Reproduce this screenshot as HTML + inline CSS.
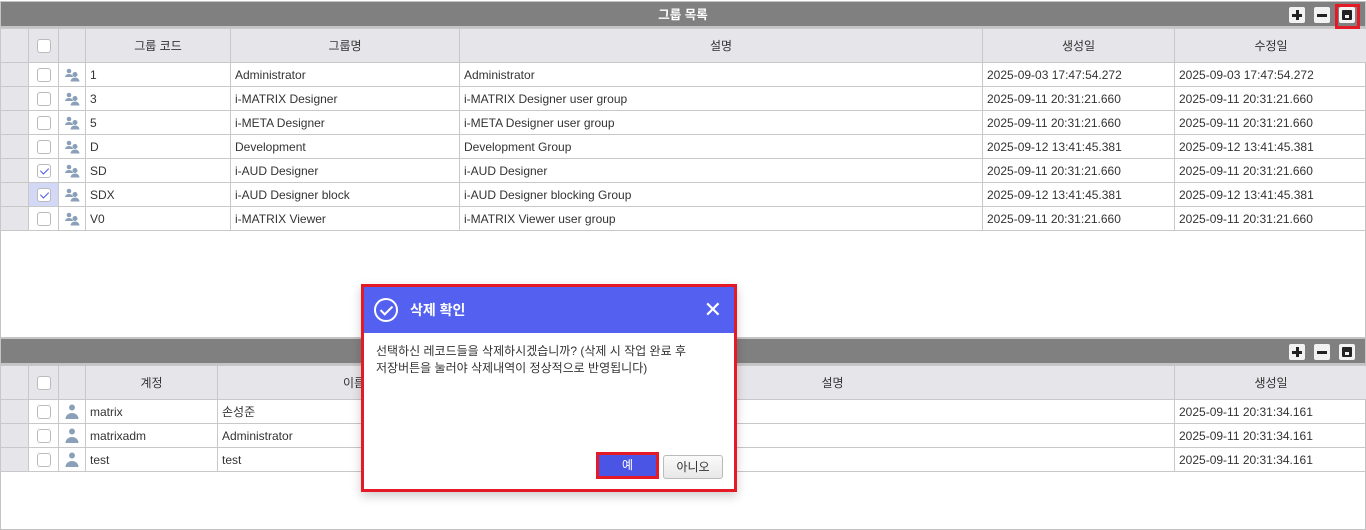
<!DOCTYPE html>
<html><head><meta charset="utf-8">
<style>
*{box-sizing:border-box;margin:0;padding:0}
body{width:1366px;height:530px;overflow:hidden;background:#fff;font-family:"Liberation Sans","Noto Sans CJK KR",sans-serif;font-size:12px;color:#333;position:relative}
.panel{position:absolute;left:0;width:1366px;border:1px solid #c4c4c4;background:#fff}
.title{height:26px;background:#808080;color:#fff;font-weight:bold;text-align:center;line-height:26px;font-size:12.5px;border-bottom:2px solid #c4c4c4;position:relative}
.btns{position:absolute;right:10px;top:5px;display:flex;gap:9px}
.b{width:16px;height:16px;background:#f2f2f2;border-radius:2px;position:relative}
.b.plus:before{content:"";position:absolute;left:3px;top:7px;width:10px;height:2.5px;background:#222}
.b.plus:after{content:"";position:absolute;left:7px;top:3px;width:2.5px;height:10px;background:#222}
.b.minus:before{content:"";position:absolute;left:3px;top:7px;width:10px;height:2.5px;background:#222}
.b.save:before{content:"";position:absolute;left:3px;top:3px;width:10px;height:10px;background:#222;border-radius:1px}
.b.save:after{content:"";position:absolute;left:6px;top:8px;width:4px;height:3px;background:#f2f2f2}
.redbox{position:absolute;left:1335px;top:4px;width:25px;height:25px;border:3px solid #e41a26}
table{border-collapse:collapse;table-layout:fixed;width:1367px;margin-left:-1px}
td,th{border:1px solid #c8c8c8;height:24px;padding:0 4px;white-space:nowrap;overflow:hidden;font-weight:normal}
th{height:34px;background:#e6e6ea;color:#333;text-align:center}
td.ri{background:#e6e6ea}
td.cb,th.cb{text-align:center;padding:0}
.chk{display:inline-block;width:14px;height:14px;border:1px solid #bbb;border-radius:3px;background:#fff;vertical-align:middle;position:relative}
.chk.on:after{content:"";position:absolute;left:4px;top:1px;width:4px;height:7px;border:solid #4a5ae8;border-width:0 1.5px 1.5px 0;transform:rotate(45deg)}
td.sel{background:#d4d8f7}
td.ic{text-align:center;padding:0}
td.ic svg{vertical-align:middle}
.dlg{position:absolute;left:361px;top:284px;width:376px;height:208px;border:3px solid #e41a26;background:#fff;box-shadow:0 4px 10px rgba(0,0,0,.2)}
.dh{height:46px;background:#5360f0;color:#fff;font-weight:bold;font-size:14px;line-height:46px;padding-left:46px;position:relative}
.dh .ok{position:absolute;left:10px;top:11px;width:24px;height:24px;border:2px solid #fff;border-radius:50%}
.dh .ok:after{content:"";position:absolute;left:7px;top:3px;width:5px;height:10px;border:solid #fff;border-width:0 2px 2px 0;transform:rotate(45deg)}
.dh .x{position:absolute;right:12px;top:0;font-size:22px;font-weight:normal}
.db{padding:10px 0 0 12px;line-height:17px;font-size:12px;color:#333}
.yes{position:absolute;left:232px;top:165px;width:63px;height:27px;border:3px solid #e41a26;background:#4a55e6;color:#fff;text-align:center;line-height:21px}
.no{position:absolute;left:299px;top:168px;width:60px;height:24px;border:1px solid #bbb;border-radius:3px;background:linear-gradient(#fafafa,#e8e8e8);text-align:center;line-height:22px;color:#333}
</style></head><body>

<div class="panel" style="top:1px;height:337px">
<div class="title">그룹 목록<div class="btns"><div class="b plus"></div><div class="b minus"></div><div class="b save"></div></div></div>
<table>
<colgroup><col style="width:28px"><col style="width:30px"><col style="width:27px"><col style="width:145px"><col style="width:229px"><col style="width:523px"><col style="width:192px"><col style="width:193px"></colgroup>
<tr><th></th><th class="cb"><span class="chk"></span></th><th></th><th>그룹 코드</th><th>그룹명</th><th>설명</th><th>생성일</th><th>수정일</th></tr>
<tr><td class="ri"></td><td class="cb"><span class="chk"></span></td><td class="ic"><svg width="16" height="14" viewBox="0 0 16 14"><circle cx="5" cy="3" r="2.3" fill="#8aa0b8"/><path d="M1 9a4 3 0 0 1 8 0z" fill="#8aa0b8"/><circle cx="11" cy="6.5" r="2.5" fill="#8aa0b8"/><path d="M6.5 13.5a4.5 4 0 0 1 9 0z" fill="#8aa0b8"/></svg></td><td>1</td><td>Administrator</td><td>Administrator</td><td>2025-09-03 17:47:54.272</td><td>2025-09-03 17:47:54.272</td></tr>
<tr><td class="ri"></td><td class="cb"><span class="chk"></span></td><td class="ic"><svg width="16" height="14" viewBox="0 0 16 14"><circle cx="5" cy="3" r="2.3" fill="#8aa0b8"/><path d="M1 9a4 3 0 0 1 8 0z" fill="#8aa0b8"/><circle cx="11" cy="6.5" r="2.5" fill="#8aa0b8"/><path d="M6.5 13.5a4.5 4 0 0 1 9 0z" fill="#8aa0b8"/></svg></td><td>3</td><td>i-MATRIX Designer</td><td>i-MATRIX Designer user group</td><td>2025-09-11 20:31:21.660</td><td>2025-09-11 20:31:21.660</td></tr>
<tr><td class="ri"></td><td class="cb"><span class="chk"></span></td><td class="ic"><svg width="16" height="14" viewBox="0 0 16 14"><circle cx="5" cy="3" r="2.3" fill="#8aa0b8"/><path d="M1 9a4 3 0 0 1 8 0z" fill="#8aa0b8"/><circle cx="11" cy="6.5" r="2.5" fill="#8aa0b8"/><path d="M6.5 13.5a4.5 4 0 0 1 9 0z" fill="#8aa0b8"/></svg></td><td>5</td><td>i-META Designer</td><td>i-META Designer user group</td><td>2025-09-11 20:31:21.660</td><td>2025-09-11 20:31:21.660</td></tr>
<tr><td class="ri"></td><td class="cb"><span class="chk"></span></td><td class="ic"><svg width="16" height="14" viewBox="0 0 16 14"><circle cx="5" cy="3" r="2.3" fill="#8aa0b8"/><path d="M1 9a4 3 0 0 1 8 0z" fill="#8aa0b8"/><circle cx="11" cy="6.5" r="2.5" fill="#8aa0b8"/><path d="M6.5 13.5a4.5 4 0 0 1 9 0z" fill="#8aa0b8"/></svg></td><td>D</td><td>Development</td><td>Development Group</td><td>2025-09-12 13:41:45.381</td><td>2025-09-12 13:41:45.381</td></tr>
<tr><td class="ri"></td><td class="cb"><span class="chk on"></span></td><td class="ic"><svg width="16" height="14" viewBox="0 0 16 14"><circle cx="5" cy="3" r="2.3" fill="#8aa0b8"/><path d="M1 9a4 3 0 0 1 8 0z" fill="#8aa0b8"/><circle cx="11" cy="6.5" r="2.5" fill="#8aa0b8"/><path d="M6.5 13.5a4.5 4 0 0 1 9 0z" fill="#8aa0b8"/></svg></td><td>SD</td><td>i-AUD Designer</td><td>i-AUD Designer</td><td>2025-09-11 20:31:21.660</td><td>2025-09-11 20:31:21.660</td></tr>
<tr><td class="ri"></td><td class="cb sel"><span class="chk on"></span></td><td class="ic"><svg width="16" height="14" viewBox="0 0 16 14"><circle cx="5" cy="3" r="2.3" fill="#8aa0b8"/><path d="M1 9a4 3 0 0 1 8 0z" fill="#8aa0b8"/><circle cx="11" cy="6.5" r="2.5" fill="#8aa0b8"/><path d="M6.5 13.5a4.5 4 0 0 1 9 0z" fill="#8aa0b8"/></svg></td><td>SDX</td><td>i-AUD Designer block</td><td>i-AUD Designer blocking Group</td><td>2025-09-12 13:41:45.381</td><td>2025-09-12 13:41:45.381</td></tr>
<tr><td class="ri"></td><td class="cb"><span class="chk"></span></td><td class="ic"><svg width="16" height="14" viewBox="0 0 16 14"><circle cx="5" cy="3" r="2.3" fill="#8aa0b8"/><path d="M1 9a4 3 0 0 1 8 0z" fill="#8aa0b8"/><circle cx="11" cy="6.5" r="2.5" fill="#8aa0b8"/><path d="M6.5 13.5a4.5 4 0 0 1 9 0z" fill="#8aa0b8"/></svg></td><td>V0</td><td>i-MATRIX Viewer</td><td>i-MATRIX Viewer user group</td><td>2025-09-11 20:31:21.660</td><td>2025-09-11 20:31:21.660</td></tr>
</table>
</div>
<div class="redbox"></div>

<div class="panel" style="top:338px;height:192px">
<div class="title"><div class="btns"><div class="b plus"></div><div class="b minus"></div><div class="b save"></div></div></div>
<table>
<colgroup><col style="width:28px"><col style="width:30px"><col style="width:27px"><col style="width:132px"><col style="width:273px"><col style="width:684px"><col style="width:193px"></colgroup>
<tr><th></th><th class="cb"><span class="chk"></span></th><th></th><th>계정</th><th>이름</th><th>설명</th><th>생성일</th></tr>
<tr><td class="ri"></td><td class="cb"><span class="chk"></span></td><td class="ic"><svg width="16" height="15" viewBox="0 0 16 15"><circle cx="8" cy="3.5" r="3" fill="#8aa0b8"/><path d="M1.5 15a6.5 6 0 0 1 13 0z" fill="#8aa0b8"/></svg></td><td>matrix</td><td>손성준</td><td></td><td>2025-09-11 20:31:34.161</td></tr>
<tr><td class="ri"></td><td class="cb"><span class="chk"></span></td><td class="ic"><svg width="16" height="15" viewBox="0 0 16 15"><circle cx="8" cy="3.5" r="3" fill="#8aa0b8"/><path d="M1.5 15a6.5 6 0 0 1 13 0z" fill="#8aa0b8"/></svg></td><td>matrixadm</td><td>Administrator</td><td></td><td>2025-09-11 20:31:34.161</td></tr>
<tr><td class="ri"></td><td class="cb"><span class="chk"></span></td><td class="ic"><svg width="16" height="15" viewBox="0 0 16 15"><circle cx="8" cy="3.5" r="3" fill="#8aa0b8"/><path d="M1.5 15a6.5 6 0 0 1 13 0z" fill="#8aa0b8"/></svg></td><td>test</td><td>test</td><td></td><td>2025-09-11 20:31:34.161</td></tr>
</table>
</div>

<div class="dlg">
<div class="dh"><span class="ok"></span>삭제 확인<span class="x">✕</span></div>
<div class="db">선택하신 레코드들을 삭제하시겠습니까? (삭제 시 작업 완료 후<br>저장버튼을 눌러야 삭제내역이 정상적으로 반영됩니다)</div>
<div class="yes">예</div>
<div class="no">아니오</div>
</div>
</body></html>
